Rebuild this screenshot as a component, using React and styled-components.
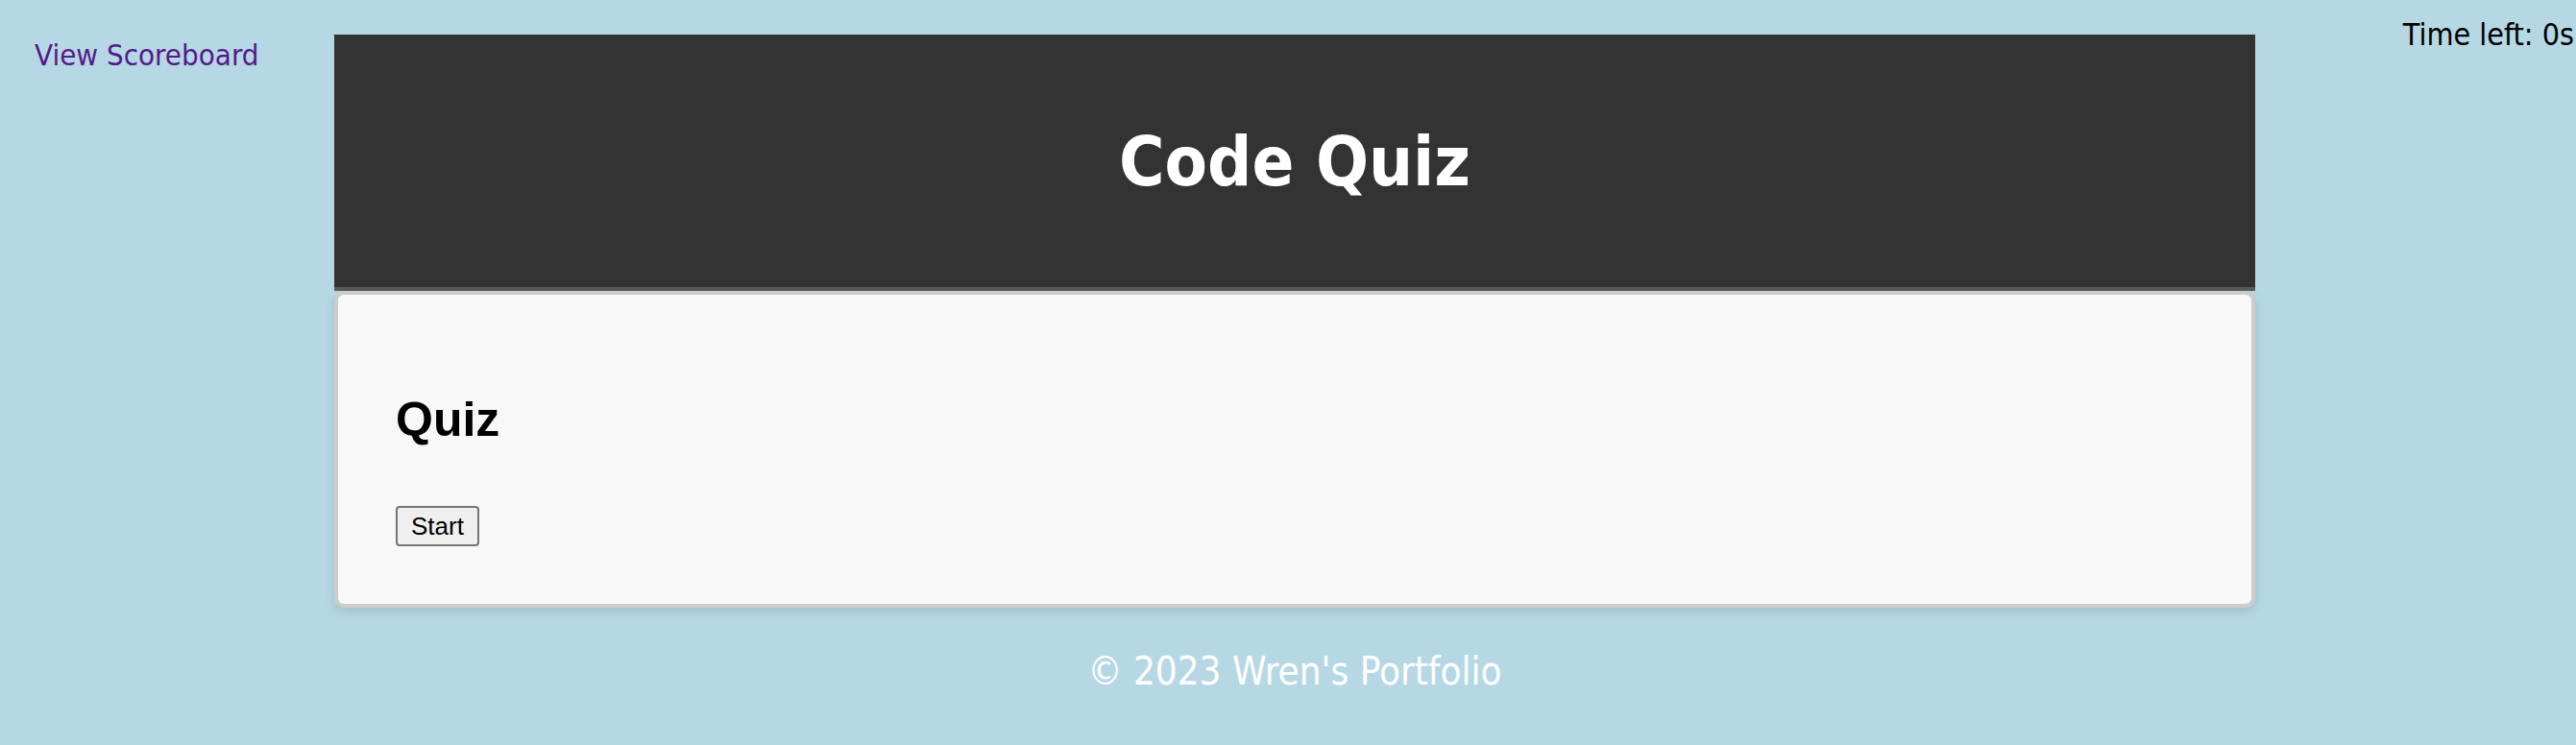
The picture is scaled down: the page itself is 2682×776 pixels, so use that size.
import React from 'react';
import styled, { createGlobalStyle } from 'styled-components';

const GlobalStyle = createGlobalStyle`
    html, body {
        margin: 0;
        padding: 0;
        background: #b6d8e4;
        font-family: "DejaVu Sans Condensed", "DejaVu Sans", sans-serif;
    }
`

const Page = styled.div`
    display: grid;
    grid-template-columns: 348px 2000px 1fr;
    align-items: start;
    min-height: 776px;
`

const ScoreLink = styled.a`
    display: block;
    margin: 38px 0 0 36px;
    font-size: 31px;
    line-height: 38px;
    color: #551a8b;
    text-decoration: none;
    cursor: pointer;
`

const Timer = styled.div`
    margin-top: 17px;
    text-align: right;
    padding-right: 2px;
    font-size: 32px;
    line-height: 38px;
    color: #000;
`

const Main = styled.main`
    margin-top: 36px;
    display: flex;
    flex-direction: column;
`

const Header = styled.header`
    height: 263px;
    display: flex;
    align-items: center;
    justify-content: center;
    background: #333;
    border-bottom: 4px solid #5a5a5a;
`

const Title = styled.h1`
    margin: 0;
    color: #fff;
    font-size: 72px;
    font-weight: bold;
    line-height: 1;
`

const Card = styled.section`
    box-sizing: border-box;
    height: 330px;
    padding: 101px 60px 0;
    background: #f8f8f8;
    border: 4px solid #cccccc;
    border-radius: 10px;
    box-shadow: 0 4px 12px rgba(0, 0, 0, 0.12);
`

const CardTitle = styled.h2`
    margin: 0 0 61px;
    font-family: "Liberation Sans", Arial, sans-serif;
    font-size: 50px;
    line-height: 58px;
    font-weight: bold;
    color: #000;
`

const StartButton = styled.button`
    box-sizing: border-box;
    height: 42px;
    width: 87px;
    padding: 0 10px;
    font-family: "Liberation Sans", Arial, sans-serif;
    font-size: 26px;
    color: #000;
    background: #efefef;
    border: 2px solid #767676;
    border-radius: 4px;
    cursor: pointer;
`

const Footer = styled.footer`
    margin-top: 43px;
    text-align: center;
    color: #fff;
    font-size: 40px;
    line-height: 1.164;
`

export default function App() {
    return (
        <>
            <GlobalStyle />
            <Page>
                <ScoreLink href="#">View Scoreboard</ScoreLink>
                <Main>
                    <Header>
                        <Title>Code Quiz</Title>
                    </Header>
                    <Card>
                        <CardTitle>Quiz</CardTitle>
                        <StartButton>Start</StartButton>
                    </Card>
                    <Footer>© 2023 Wren's Portfolio</Footer>
                </Main>
                <Timer>Time left: 0s</Timer>
            </Page>
        </>
    );
}
